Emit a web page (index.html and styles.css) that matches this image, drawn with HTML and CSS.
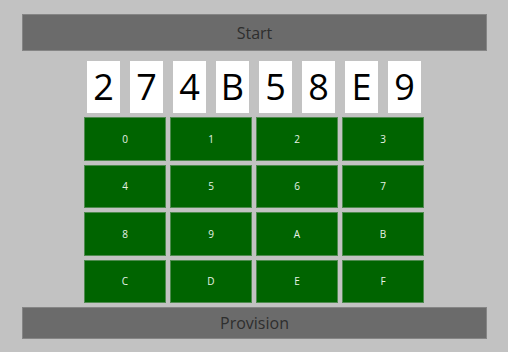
FILE: index.html
```html
<!DOCTYPE html>
<html lang="en">
<head>
    <meta charset="UTF-8">
    <meta name="viewport" content="width=device-width, initial-scale=1.0">
    <title>Provisioning Keypad</title>
    <link rel="stylesheet" href="styles.css">
</head>
<body>
    <div class="page">
        <button class="bar bar-start">Start</button>

        <div class="code-row">
            <div class="digit">2</div>
            <div class="digit">7</div>
            <div class="digit">4</div>
            <div class="digit">B</div>
            <div class="digit">5</div>
            <div class="digit">8</div>
            <div class="digit">E</div>
            <div class="digit">9</div>
        </div>

        <div class="keypad">
            <button class="key">0</button>
            <button class="key">1</button>
            <button class="key">2</button>
            <button class="key">3</button>
            <button class="key">4</button>
            <button class="key">5</button>
            <button class="key">6</button>
            <button class="key">7</button>
            <button class="key">8</button>
            <button class="key">9</button>
            <button class="key">A</button>
            <button class="key">B</button>
            <button class="key">C</button>
            <button class="key">D</button>
            <button class="key">E</button>
            <button class="key">F</button>
        </div>

        <button class="bar bar-provision">Provision</button>
    </div>
</body>
</html>
```

FILE: styles.css
```css
body {
    margin: 0;
    background-color: #c2c2c2;
    font-family: "Open Sans", "Noto Sans", sans-serif;
}
.page {
    display: flex;
    flex-direction: column;
    align-items: center;
    padding-top: 14px;
}
button {
    font-family: inherit;
    cursor: pointer;
}
.bar {
    width: 465px;
    margin-left: 1px;
    background-color: #6b6b6b;
    border: 1px solid #858585;
    color: #2e2e2e;
    font-size: 16px;
    padding: 0;
}
.bar-start {
    height: 37px;
}
.bar-provision {
    height: 32px;
    margin-top: 4px;
}
.code-row {
    display: flex;
    gap: 10px;
    margin-top: 10px;
}
.digit {
    width: 33px;
    height: 52px;
    background-color: white;
    color: black;
    font-size: 36px;
    line-height: 52px;
    text-align: center;
}
.keypad {
    display: grid;
    grid-template-columns: repeat(4, 82px);
    grid-template-rows: repeat(4, 43.5px);
    gap: 4px;
    margin-top: 4px;
}
.key {
    background-color: #006400;
    border: 1px solid #4f8a4f;
    color: #e6f2e6;
    font-size: 10px;
    padding: 0;
}
.key:hover {
    background-color: #007000;
}
```
